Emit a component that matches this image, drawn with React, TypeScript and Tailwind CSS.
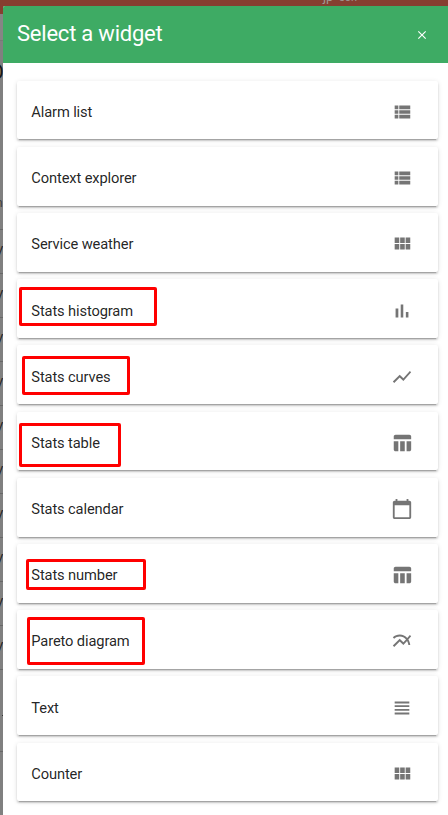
const paths = {
  list: 'M4 14h4v-4H4v4zm0 5h4v-4H4v4zM4 9h4V5H4v4zm5 5h12v-4H9v4zm0 5h12v-4H9v4zM9 5v4h12V5H9z',
  module: 'M4 11h5V5H4v6zm0 7h5v-6H4v6zm6 0h5v-6h-5v6zm6 0h5v-6h-5v6zm-6-7h5V5h-5v6zm6-6v6h5V5h-5z',
  bars: 'M5 9.2h3V19H5zM10.6 5h2.8v14h-2.8zm5.6 8H19v6h-2.8z',
  line: 'M3.5 18.49l6-6.01 4 4L22 6.92l-1.41-1.41-7.09 7.97-4-4L2 16.99z',
  table: 'M10 10.02h5V21h-5zM17 21h3c1.1 0 2-.9 2-2v-9h-5v11zm3-18H5c-1.1 0-2 .9-2 2v3h19V5c0-1.1-.9-2-2-2zM3 19c0 1.1.9 2 2 2h3V10.02H3V19z',
  calendar: 'M20 3h-1V1h-2v2H7V1H5v2H4c-1.1 0-2 .9-2 2v16c0 1.1.9 2 2 2h16c1.1 0 2-.9 2-2V5c0-1.1-.9-2-2-2zm0 18H4V8h16v13z',
  multiline: 'M22 6.92l-1.41-1.41-2.85 3.21C15.68 6.4 12.83 5 9.61 5 6.72 5 4.07 6.16 2 8l1.42 1.42C5.12 7.93 7.27 7 9.61 7c2.74 0 5.09 1.26 6.77 3.24l-2.88 3.24-4-4L2 16.99l1.5 1.5 6-6.01 4 4 4.05-4.55c.75 1.35 1.25 2.9 1.44 4.55H21c-.22-2.3-.95-4.39-2.04-6.14L22 6.92z',
  headline: 'M4 15h16v-2H4v2zm0 4h16v-2H4v2zm0-8h16V9H4v2zm0-6v2h16V5H4z',
  close: 'M19 6.41L17.59 5 12 10.59 6.41 5 5 6.41 10.59 12 5 17.59 6.41 19 12 13.41 17.59 19 19 17.59 13.41 12z',
};

type IconName = keyof typeof paths;

function Icon({ name, className }: { name: IconName; className: string }) {
  return (
    <svg viewBox="0 0 24 24" fill="currentColor" className={className} aria-hidden="true">
      <path d={paths[name]} />
    </svg>
  );
}

// `mark` places the red annotation frame relative to its card.
const widgets: { title: string; icon: IconName; mark?: string }[] = [
  { title: 'Alarm list', icon: 'list' },
  { title: 'Context explorer', icon: 'list' },
  { title: 'Service weather', icon: 'module' },
  { title: 'Stats histogram', icon: 'bars', mark: 'left-[1.5px] top-[7.3px] w-[138.5px] h-[39.5px]' },
  { title: 'Stats curves', icon: 'line', mark: 'left-[4.5px] top-[10.5px] w-[108.5px] h-[39.5px]' },
  { title: 'Stats table', icon: 'table', mark: 'left-[1.5px] top-[11.3px] w-[102.5px] h-[44px]' },
  { title: 'Stats calendar', icon: 'calendar' },
  { title: 'Stats number', icon: 'table', mark: 'left-[8.5px] top-[14.6px] w-[120.5px] h-[31.5px]' },
  { title: 'Pareto diagram', icon: 'multiline', mark: 'left-[9.5px] top-[6.6px] w-[118.5px] h-[48.5px]' },
  { title: 'Text', icon: 'headline' },
  { title: 'Counter', icon: 'module' },
];

const rowGlyphs = [251, 295, 339, 383, 427, 471, 515, 559, 603, 647];

function Backdrop() {
  return (
    <div className="absolute inset-0 overflow-hidden bg-[#808080]">
      <div className="relative h-[14px] overflow-hidden bg-[#863f30]">
        <span className="absolute left-[323px] -top-[11px] text-[13px] leading-[15px] text-[#a09896]">jp</span>
        <span className="absolute left-[339px] -top-[9px] text-[11px] leading-[13px] text-[#a09896]">con</span>
      </div>
      <div className="h-[27px] border-b border-[#787878] bg-[#858585]" />
      <span className="absolute -left-[10px] top-[60px] text-[20px] leading-6 text-[#181818]">O</span>
      <span className="absolute -left-[4px] top-[195px] text-[12px] leading-4 text-[#3c3c3c]">n</span>
      {[229, 273, 317, 361, 405, 449, 493, 537, 581, 625, 669, 751].map((y) => (
        <div key={y} className="absolute left-0 h-px w-1 bg-[#686868]" style={{ top: y }} />
      ))}
      {rowGlyphs.map((y) => (
        <span key={y} className="absolute -left-[5px] text-[13px] leading-4 text-[#242424]" style={{ top: y - 8 }}>
          V
        </span>
      ))}
      <div className="absolute left-[2px] top-[715px] h-px w-px bg-[#333]" />
    </div>
  );
}

export default function App() {
  return (
    <div className="relative h-[815px] w-[448px] overflow-hidden font-['Roboto',sans-serif]">
      <Backdrop />
      <main className="relative ml-[3px] mt-[6px] flex h-[820px] flex-col rounded-tl-[2px] bg-white">
        <header className="flex h-[57px] shrink-0 items-center justify-between rounded-tl-[2px] bg-[#3eab64] pl-[14px] pr-[19px] text-white">
          <h1 className="relative -top-px text-[22px] leading-7 tracking-[-0.22px]">Select a widget</h1>
          <button type="button" aria-label="Close" className="flex size-[14px] items-center justify-center">
            <Icon name="close" className="size-[14px] shrink-0" />
          </button>
        </header>
        <div className="flex flex-col gap-[7.5px] bg-white pl-[14px] pr-[10px] pt-[17.7px]">
          {widgets.map((w) => (
            <section
              key={w.title}
              className="relative flex h-[58.7px] shrink-0 items-center justify-between rounded-[2px] bg-white pl-[14.3px] pr-[25px] pt-[3.9px] shadow-[0_3px_1px_-2px_rgba(0,0,0,0.2),0_2px_2px_0_rgba(0,0,0,0.14),0_1px_5px_0_rgba(0,0,0,0.12)]"
            >
              <span className="text-[14.7px] leading-[22px] tracking-[-0.13px] text-black/87">{w.title}</span>
              <Icon name={w.icon} className="size-[22px] text-[#757575]" />
              {w.mark && <div className={`absolute rounded-[2px] border-3 border-[#ff0000] ${w.mark}`} />}
            </section>
          ))}
        </div>
      </main>
    </div>
  );
}
